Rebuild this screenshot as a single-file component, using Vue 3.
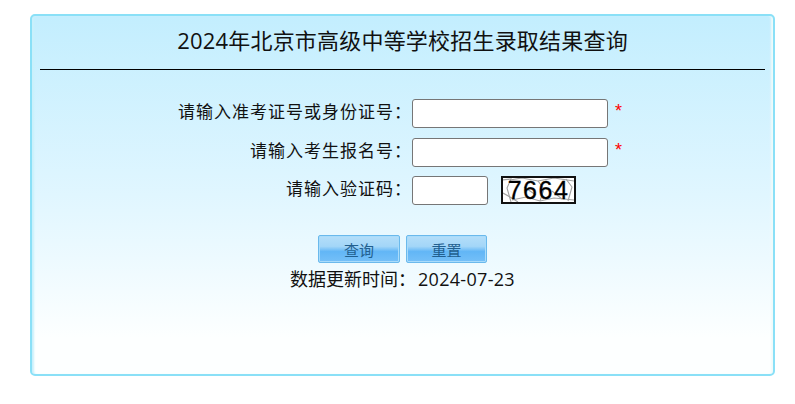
<script setup>
import { ref } from 'vue'

const ticket = ref('')
const signup = ref('')
const code = ref('')
const updated = '2024-07-23'

function reset() {
  ticket.value = ''
  signup.value = ''
  code.value = ''
}
</script>

<template>
  <div class="page">
    <div class="card">
      <h1 class="title">2024年北京市高级中等学校招生录取结果查询</h1>
      <form class="form" @submit.prevent>
        <div class="row row-first">
          <label class="label">请输入准考证号或身份证号：</label>
          <input v-model="ticket" class="input" type="text" />
          <span class="star">*</span>
        </div>
        <div class="row">
          <label class="label">请输入考生报名号：</label>
          <input v-model="signup" class="input" type="text" />
          <span class="star">*</span>
        </div>
        <div class="row row-code">
          <label class="label">请输入验证码：</label>
          <input v-model="code" class="input input-code" type="text" />
          <div class="captcha">
            <svg class="noise" viewBox="0 0 73 26" width="73" height="26">
              <g fill="none" stroke="#a2a2a2" stroke-width="1.1">
                <path d="M0 3 L9 2 L5 11 L9 25" />
                <path d="M8 3 L20 1 L36 4 L52 1 L72 4" />
                <path d="M10 23 L24 20 L38 24 L52 21 L72 23" />
                <path d="M64 2 L70 10 L66 24" />
                <path d="M1 16 L8 20 L16 25" />
                <path d="M36 4 L42 12 L38 24" />
                <path d="M22 10 L34 18" />
                <path d="M50 14 L60 22" />
              </g>
            </svg>
            <span class="captcha-text">7664</span>
          </div>
        </div>
        <div class="actions">
          <button class="btn btn-query" type="submit">查询</button>
          <button class="btn btn-reset" type="button" @click="reset">重置</button>
        </div>
        <div class="update">
          <span>数据更新时间：</span>
          <span class="update-date">{{ updated }}</span>
        </div>
      </form>
    </div>
  </div>
</template>

<style>
html,
body {
  background: #fff;
}
</style>

<style scoped>
.page {
  padding: 14px 20px 28px 30px;
  font-family: "Open Sans", "Noto Sans CJK SC", sans-serif;
  color: #111;
}

.card {
  box-sizing: border-box;
  width: 745px;
  height: 362px;
  padding: 0 8px;
  border: 2px solid #8ae0f7;
  border-radius: 5px;
  background: linear-gradient(to bottom, #c3eefe 0%, #e0f6ff 50%, #fdffff 90%);
  box-shadow: inset 3px 0 2px -1px #c9f0fb, inset -3px 0 2px -1px #f0fafa;
}

.title {
  height: 53px;
  margin: 0;
  border-bottom: 1px solid #000;
  font-size: 22px;
  font-weight: normal;
  letter-spacing: 0.2px;
  line-height: 48px;
  text-align: center;
}

.form {
  padding-top: 28px;
}

.row {
  display: flex;
  align-items: center;
  height: 30px;
  margin-bottom: 8px;
}

.row-first {
  margin-bottom: 9px;
}

.row-code {
  margin-bottom: 0;
}

.label {
  width: 372px;
  padding-bottom: 2px;
  box-sizing: border-box;
  font-size: 17px;
  letter-spacing: 1px;
  line-height: 24px;
  text-align: right;
}

.input {
  box-sizing: border-box;
  width: 196px;
  height: 29px;
  padding: 1px 2px;
  border: 1px solid #767676;
  border-radius: 3px;
  background: #fff;
  outline: none;
}

.input-code {
  width: 76px;
}

.star {
  margin-top: -4px;
  margin-left: 7px;
  color: #f00;
  font-family: "Liberation Sans", sans-serif;
  font-size: 18px;
  line-height: 18px;
}

.captcha {
  position: relative;
  box-sizing: border-box;
  width: 75px;
  height: 28px;
  margin-left: 13px;
  border: 2px solid #111;
  background: #fff;
  overflow: hidden;
  text-align: center;
}

.noise {
  position: absolute;
  left: -1px;
  top: -1px;
}

.captcha-text {
  position: relative;
  font-family: "Liberation Sans", sans-serif;
  font-size: 25px;
  line-height: 24px;
  letter-spacing: 1.5px;
  color: #000;
  -webkit-text-stroke: 0.3px #000;
}

.actions {
  display: flex;
  gap: 6px;
  padding: 30px 0 0 278px;
}

.btn {
  box-sizing: border-box;
  height: 28px;
  padding: 0;
  border: 1px solid #6ab9ec;
  border-radius: 2px;
  background: linear-gradient(to bottom, #b4def9 0%, #a3d6f8 40%, #62b6f6 60%, #75c0f8 100%);
  box-shadow: inset 0 0 0 1px #a9dcfb;
  color: #22608f;
  font-family: inherit;
  font-size: 15px;
}

.btn-query {
  width: 82px;
}

.btn-reset {
  width: 81px;
}

.update {
  display: flex;
  padding: 4px 0 0 250px;
  font-size: 18px;
  line-height: 24px;
}

.update-date {
  margin-left: 2px;
  letter-spacing: 0.3px;
}
</style>
